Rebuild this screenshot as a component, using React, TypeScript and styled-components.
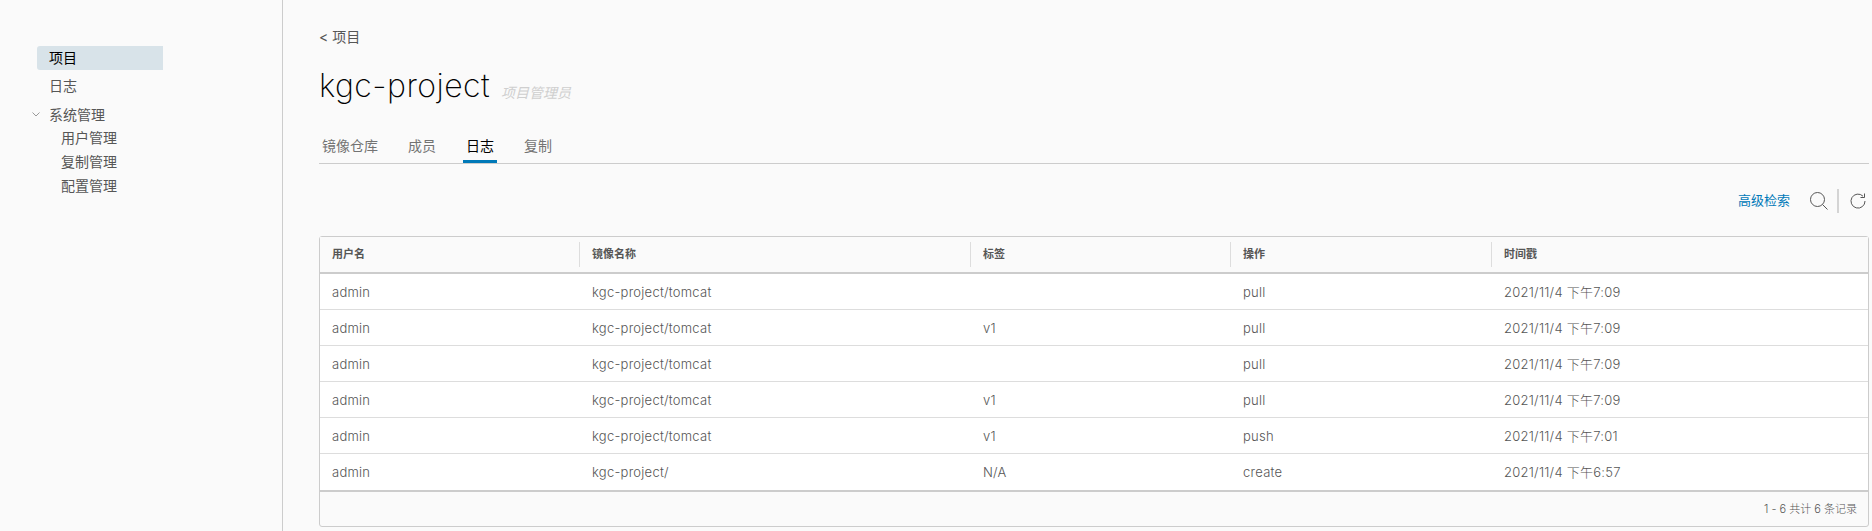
import styled, { createGlobalStyle } from "styled-components";

const GlobalStyle = createGlobalStyle`
  html, body {
    margin: 0;
    padding: 0;
    background: #fafafa;
  }
  body {
    font-family: Inter, "Noto Sans CJK SC", sans-serif;
    color: #565656;
  }
`;

const Page = styled.div`
  display: flex;
  width: 1872px;
  height: 531px;
  overflow: hidden;
`;

const Sidebar = styled.nav`
  width: 245px;
  flex-shrink: 0;
  border-right: 1px solid #ccc;
  padding: 46px 0 0 37px;
`;

const NavItem = styled.div<{ active?: boolean }>`
  width: 126px;
  height: 24px;
  line-height: 24px;
  margin-bottom: 4px;
  padding-left: 12px;
  box-sizing: border-box;
  font-size: 14px;
  color: ${props => props.active ? "#000" : "#565656"};
  background: ${props => props.active ? "#d8e3e9" : "transparent"};
  border-radius: 3px 0 0 3px;
`;

const NavGroup = styled.div`
  display: flex;
  align-items: center;
  height: 24px;
  margin-left: -5px;
  font-size: 14px;
  gap: 9px;
`;

const SubNav = styled.div`
  display: flex;
  flex-direction: column;
  padding-left: 24px;
`;

const SubItem = styled.div`
  height: 24px;
  line-height: 24px;
  font-size: 14px;
`;

const Main = styled.main`
  flex: 1;
  min-width: 0;
  padding: 27px 3px 0 36px;
`;

const BackLink = styled.div`
  font-size: 14px;
  line-height: 20px;
  color: #565656;
`;

const TitleRow = styled.div`
  display: flex;
  align-items: baseline;
  gap: 11px;
  margin-top: 19px;
  height: 40px;
`;

const Title = styled.h1`
  margin: 0;
  font-size: 32px;
  line-height: 40px;
  font-weight: 200;
  letter-spacing: 0.45px;
  color: #000;
`;

const Role = styled.span`
  font-size: 14px;
  font-style: italic;
  color: #cfcfcf;
  transform: translateY(1px);
`;

const Tabs = styled.div`
  display: flex;
  gap: 24px;
  height: 33px;
  margin-top: 24px;
  border-bottom: 1px solid #ccc;
`;

const Tab = styled.div<{ active?: boolean }>`
  padding: 0 3px;
  font-size: 14px;
  line-height: 32px;
  height: 33px;
  box-sizing: border-box;
  color: ${props => props.active ? "#000" : "#737373"};
  border-bottom: 3px solid ${props => props.active ? "#0079b8" : "transparent"};
`;

const Toolbar = styled.div`
  display: flex;
  align-items: center;
  justify-content: flex-end;
  height: 24px;
  margin-top: 25px;
  padding-right: 3px;
`;

const AdvancedLink = styled.span`
  font-size: 13px;
  color: #0079b8;
  margin: 0 20px 4px 0;
`;

const ToolDivider = styled.span`
  width: 2px;
  height: 24px;
  background: #d4d4d4;
  margin: 0 11px 0 9px;
`;

const Grid = styled.div`
  margin-top: 23px;
  border: 1px solid #ccc;
  border-radius: 3px;
  background: #fafafa;
`;

const Row = styled.div<{ head?: boolean; last?: boolean }>`
  display: grid;
  grid-template-columns: 260px 391px 260px 261px 1fr;
  height: ${props => props.head ? "37px" : props.last ? "38px" : "36px"};
  box-sizing: border-box;
  background: ${props => props.head ? "#fafafa" : "#fff"};
  border-bottom: ${props => props.head || props.last ? "2px solid #ccc" : "1px solid #ddd"};
`;

const BodyCell = styled.div`
  padding-left: 12px;
  font-size: 13px;
  font-weight: 300;
  letter-spacing: 0.25px;
  line-height: 36px;
  color: #565656;
`;

const HeadCell = styled.div`
  position: relative;
  padding-left: 12px;
  font-size: 11px;
  font-weight: 700;
  line-height: 35px;
  color: #565656;
  & + &::before {
    content: "";
    position: absolute;
    left: -1px;
    top: 5px;
    bottom: 5px;
    width: 1px;
    background: #ddd;
  }
`;

const Footer = styled.div`
  height: 34px;
  line-height: 34px;
  padding-right: 11px;
  text-align: right;
  font-size: 11px;
  font-weight: 300;
  color: #565656;
`;

const columns = ["用户名", "镜像名称", "标签", "操作", "时间戳"];

const logs = [
  ["admin", "kgc-project/tomcat", "", "pull", "2021/11/4 下午7:09"],
  ["admin", "kgc-project/tomcat", "v1", "pull", "2021/11/4 下午7:09"],
  ["admin", "kgc-project/tomcat", "", "pull", "2021/11/4 下午7:09"],
  ["admin", "kgc-project/tomcat", "v1", "pull", "2021/11/4 下午7:09"],
  ["admin", "kgc-project/tomcat", "v1", "push", "2021/11/4 下午7:01"],
  ["admin", "kgc-project/", "N/A", "create", "2021/11/4 下午6:57"],
];

const App = () => {
  return (
    <Page>
      <GlobalStyle />
      <Sidebar>
        <NavItem active>项目</NavItem>
        <NavItem>日志</NavItem>
        <NavGroup>
          <svg width="8" height="5" viewBox="0 0 8 5" fill="none" stroke="#9a9a9a" strokeWidth="1">
            <path d="M0.5 0.5l3.5 3.5 3.5-3.5" />
          </svg>
          系统管理
        </NavGroup>
        <SubNav>
          <SubItem>用户管理</SubItem>
          <SubItem>复制管理</SubItem>
          <SubItem>配置管理</SubItem>
        </SubNav>
      </Sidebar>
      <Main>
        <BackLink>&lt; 项目</BackLink>
        <TitleRow>
          <Title>kgc-project</Title>
          <Role>项目管理员</Role>
        </TitleRow>
        <Tabs>
          <Tab>镜像仓库</Tab>
          <Tab>成员</Tab>
          <Tab active>日志</Tab>
          <Tab>复制</Tab>
        </Tabs>
        <Toolbar>
          <AdvancedLink>高级检索</AdvancedLink>
          <svg width="18" height="18" viewBox="0 0 18 18" fill="none" stroke="#565656" strokeWidth="1">
            <circle cx="7.5" cy="7.5" r="7" />
            <path d="M12.5 12.5l5 5" />
          </svg>
          <ToolDivider />
          <svg width="16" height="16" viewBox="0 0 16 16" fill="none" stroke="#565656" strokeWidth="1">
            <path d="M13 3.2A7 7 0 1 0 15 8" />
            <path d="M14.5 0.5v4h-4" />
          </svg>
        </Toolbar>
        <Grid>
          <Row head>
            {columns.map(col => <HeadCell key={col}>{col}</HeadCell>)}
          </Row>
          {logs.map((log, i) => (
            <Row key={i} last={i === logs.length - 1}>
              {log.map((cell, j) => <BodyCell key={j}>{cell}</BodyCell>)}
            </Row>
          ))}
          <Footer>1 - 6 共计 6 条记录</Footer>
        </Grid>
      </Main>
    </Page>
  );
};

export default App;
